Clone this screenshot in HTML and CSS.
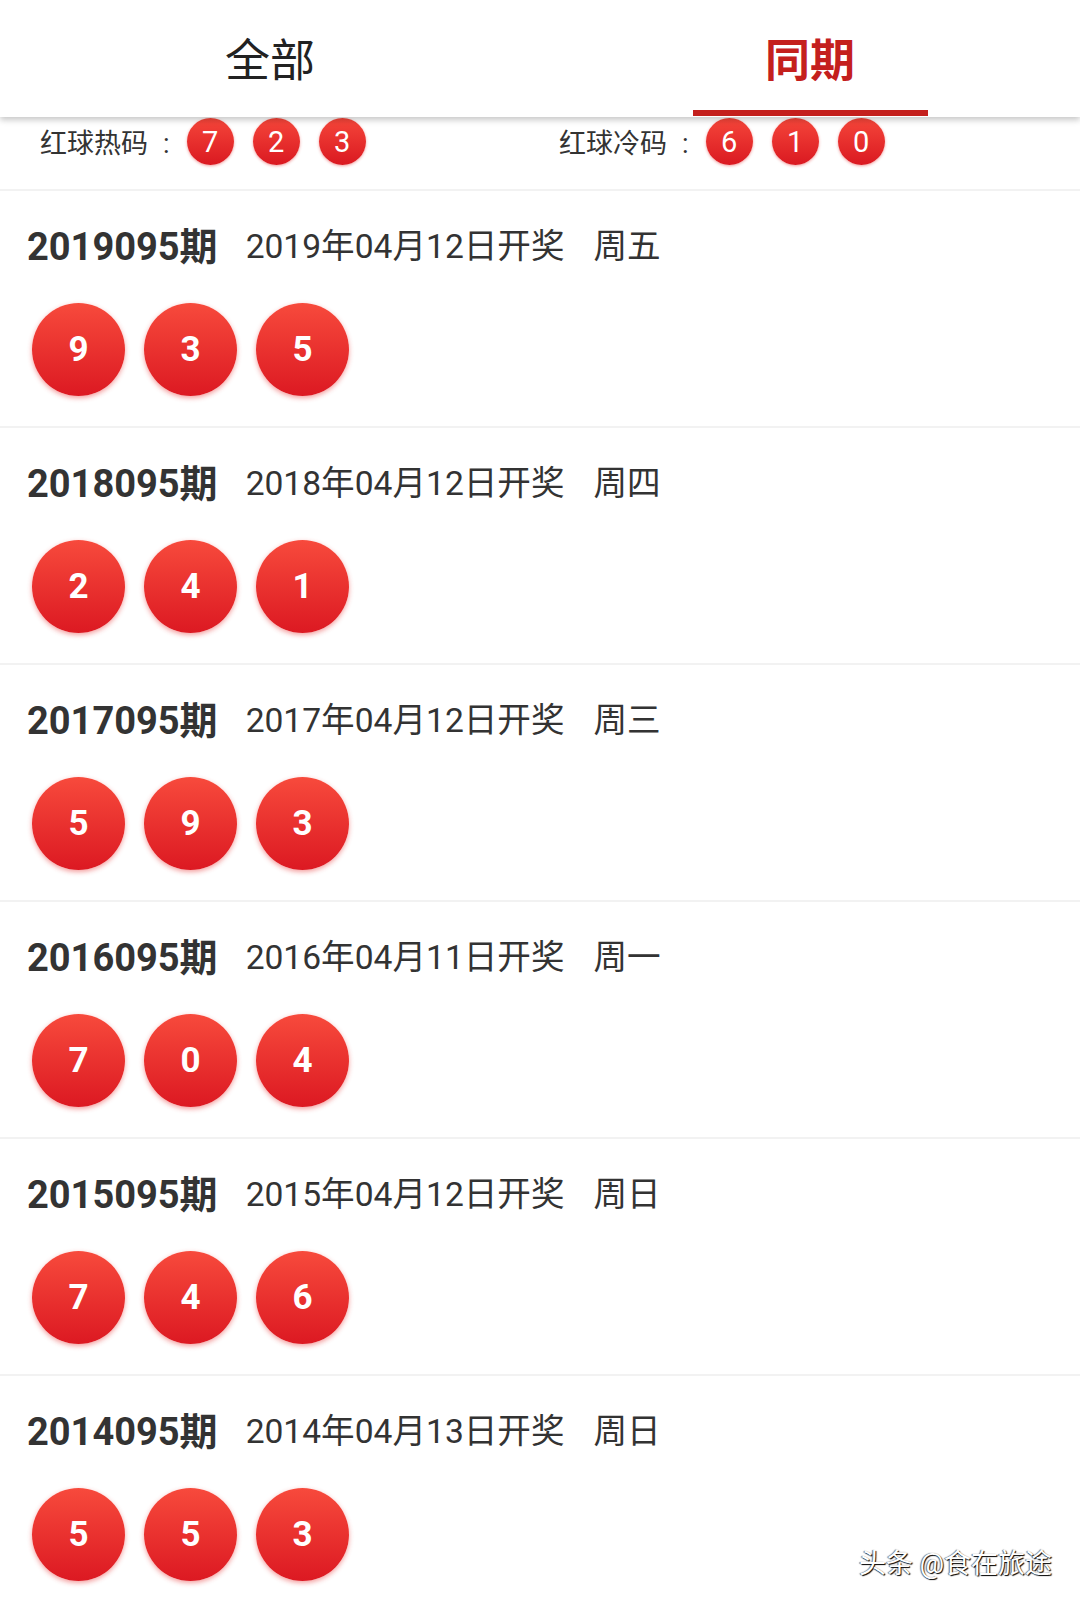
FILE: index.html
```html
<!DOCTYPE html>
<html lang="zh-CN">
<head>
    <meta charset="UTF-8">
    <meta name="viewport" content="width=device-width, initial-scale=1.0">
    <title>同期开奖</title>
    <link rel="stylesheet" href="styles.css">
</head>
<body>

<div class="tabs">
    <div class="tab">
        <span class="tab-label">全部</span>
    </div>
    <div class="tab active">
        <span class="tab-label">同期</span>
        <span class="tab-line"></span>
    </div>
</div>

<!-- 热码 / 冷码 -->
<div class="stats">
    <div class="stat hot">
        <span class="stat-label">红球热码<span class="colon">:</span></span>
        <span class="mini-ball">7</span>
        <span class="mini-ball">2</span>
        <span class="mini-ball">3</span>
    </div>
    <div class="stat cold">
        <span class="stat-label">红球冷码<span class="colon">:</span></span>
        <span class="mini-ball">6</span>
        <span class="mini-ball">1</span>
        <span class="mini-ball">0</span>
    </div>
</div>

<div id="draws" class="draws">
    <!-- JavaScript will populate this area -->
</div>

<div class="watermark">头条 @食在旅途</div>

<script>
    const draws = [
        { issue: '2019095', date: '2019年04月12日', week: '周五', balls: [9, 3, 5] },
        { issue: '2018095', date: '2018年04月12日', week: '周四', balls: [2, 4, 1] },
        { issue: '2017095', date: '2017年04月12日', week: '周三', balls: [5, 9, 3] },
        { issue: '2016095', date: '2016年04月11日', week: '周一', balls: [7, 0, 4] },
        { issue: '2015095', date: '2015年04月12日', week: '周日', balls: [7, 4, 6] },
        { issue: '2014095', date: '2014年04月13日', week: '周日', balls: [5, 5, 3] }
    ];

    const list = document.getElementById('draws');
    draws.forEach(d => {
        const balls = d.balls.map(n => `<span class="ball">${n}</span>`).join('');
        list.innerHTML += `
            <div class="draw">
                <div class="draw-title">
                    <span class="issue">${d.issue}期</span>
                    <span class="date">${d.date}开奖</span>
                    <span class="week">${d.week}</span>
                </div>
                <div class="balls">${balls}</div>
            </div>`;
    });
</script>

</body>
</html>
```

FILE: styles.css
```css
body {
    margin: 0;
    font-family: Roboto, "Noto Sans CJK SC", sans-serif;
    color: #333;
    background: #fff;
}

/* tabs */
.tabs {
    display: flex;
    height: 117px;
    background: #fff;
    box-shadow: 0 3px 6px rgba(0, 0, 0, 0.22);
    position: relative;
    z-index: 2;
}
.tab {
    flex: 1;
    display: flex;
    flex-direction: column;
    align-items: center;
    padding-top: 35px;
    box-sizing: border-box;
}
.tab-label {
    font-size: 45px;
    line-height: 54px;
    color: #222;
}
.tab.active .tab-label {
    color: #c4201d;
    font-weight: bold;
}
.tab-line {
    margin-top: auto;
    margin-bottom: 1px;
    width: 235px;
    height: 6px;
    background: #c4201d;
}

/* hot / cold */
.stats {
    display: flex;
    height: 74px;
    box-sizing: border-box;
    padding-top: 1px;
    border-bottom: 2px solid #f2f2f2;
}
.stat {
    width: 540px;
    box-sizing: border-box;
    display: flex;
    align-items: center;
    align-self: flex-start;
    gap: 19px;
}
.stat.hot {
    padding-left: 40px;
}
.stat.cold {
    padding-left: 19px;
}
.stat-label {
    font-size: 27px;
    color: #333;
    margin-right: -2px;
}
.colon {
    margin-left: 15px;
}
.mini-ball {
    width: 47px;
    height: 47px;
    border-radius: 50%;
    background: linear-gradient(#f5463a, #da1921);
    box-shadow: 0 1px 3px rgba(225, 40, 40, 0.45);
    color: #fff;
    font-size: 29px;
    display: flex;
    align-items: center;
    justify-content: center;
}

/* draws */
.draw {
    padding: 30px 0 30px 27px;
    border-bottom: 2px solid #f2f2f2;
}
.draw-title {
    display: flex;
    align-items: center;
    height: 44px;
}
.issue {
    font-size: 38px;
    font-weight: bold;
    color: #333;
}
.date {
    font-size: 33.6px;
    margin-left: 28px;
    color: #333;
}
.week {
    font-size: 33.6px;
    margin-left: 29px;
    color: #333;
}
.balls {
    display: flex;
    gap: 19px;
    margin-top: 38px;
    padding-left: 5px;
}
.ball {
    width: 93px;
    height: 93px;
    border-radius: 50%;
    background: linear-gradient(#f74a3c, #dc1922);
    box-shadow: 0 2px 5px rgba(230, 40, 40, 0.45);
    color: #fff;
    font-size: 35px;
    font-weight: bold;
    display: flex;
    align-items: center;
    justify-content: center;
}

.watermark {
    position: absolute;
    left: 859px;
    top: 1542px;
    font-size: 27px;
    color: #fff;
    text-shadow: 1px 1px 1px #000, -1px 0 1px rgba(0, 0, 0, 0.6);
    white-space: nowrap;
}
```
